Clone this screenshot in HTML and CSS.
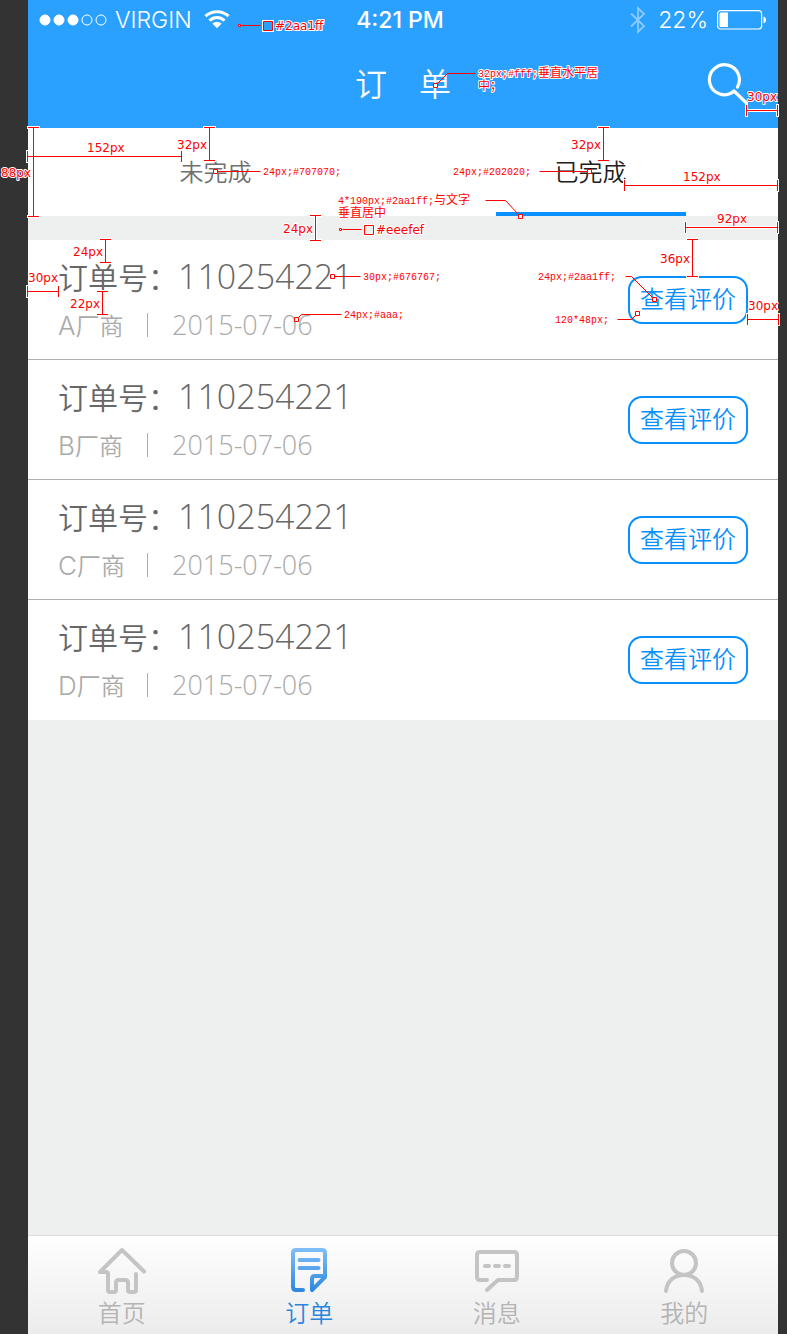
FILE: index.html
```html
<!DOCTYPE html>
<html lang="zh-CN">
<head>
<meta charset="utf-8">
<meta name="viewport" content="width=device-width, initial-scale=1">
<title>订单</title>
<link rel="stylesheet" href="styles.css">
</head>
<body>
<div class="phone">
  <header class="header">
    <div class="status">
      <div class="status-left">
        <svg class="signal" width="68" height="13" viewBox="0 0 68 13" fill="#fff" stroke="#fff" aria-hidden="true"><circle cx="6" cy="6" r="5"/><circle cx="20" cy="6" r="5"/><circle cx="34" cy="6" r="5"/><circle cx="48" cy="6" r="5" fill="none"/><circle cx="62" cy="6" r="5" fill="none"/></svg>
        <span class="carrier">VIRGIN</span>
        <svg width="26" height="20" viewBox="0 0 26 20" fill="none" stroke="#fff" stroke-width="3" aria-hidden="true"><path d="M1.500 6.200C8 .2 18 .2 24.500 6.200M5.500 10.600C10 6.600 16 6.600 20.500 10.600"/><path d="M8.300 13.600Q13 9.800 17.700 13.600L13 18.200Z" fill="#fff" stroke="none"/></svg>
      </div>
      <span class="clock">4:21 PM</span>
      <div class="status-right">
        <svg class="bluetooth" width="16" height="28" viewBox="0 0 16 28" fill="none" stroke="#8ccaff" stroke-width="1.800" aria-hidden="true"><path d="M1 7.500L14 20L8 26V2L14 8L1 20.500"/></svg>
        <span class="percent">22%</span>
        <svg width="50" height="20" viewBox="0 0 50 20" aria-hidden="true"><rect x="1.600" y=".7" width="44" height="18.300" rx="3" fill="none" stroke="#fff" stroke-width="1.200"/><path d="M5 2.500H12V17H5Q3.500 17 3.500 15.500V4Q3.500 2.500 5 2.500ZM47.500 6.500Q50 7 50 10T47.500 13.200Z" fill="#fff"/></svg>
      </div>
    </div>
    <div class="navbar">
      <h1 class="title">订　单</h1>
      <button class="search" type="button" aria-label="搜索"><svg width="42" height="44" viewBox="0 0 42 44" fill="none" stroke="#fff" stroke-width="3.200" stroke-linecap="round" stroke-linejoin="round"><path d="M31.500 25A15 15 0 1 0 23 32Q26 31 28 29L41 41.500"/></svg></button>
    </div>
  </header>
  <nav class="tabs">
    <a class="tab" href="#open">未完成</a>
    <a class="tab tab-active" href="#done">已完成</a>
  </nav>
  <main class="content">
    <ul class="orders">
      <li class="order"><div class="order-info"><h2 class="order-title">订单号：<span class="order-number">110254221</span></h2><p class="order-meta"><span class="order-vendor"><span class="vendor">A</span>厂商</span><span class="order-date">2015-07-06</span></p></div><button class="review" type="button">查看评价</button></li>
      <li class="order"><div class="order-info"><h2 class="order-title">订单号：<span class="order-number">110254221</span></h2><p class="order-meta"><span class="order-vendor"><span class="vendor">B</span>厂商</span><span class="order-date">2015-07-06</span></p></div><button class="review" type="button">查看评价</button></li>
      <li class="order"><div class="order-info"><h2 class="order-title">订单号：<span class="order-number">110254221</span></h2><p class="order-meta"><span class="order-vendor"><span class="vendor">C</span>厂商</span><span class="order-date">2015-07-06</span></p></div><button class="review" type="button">查看评价</button></li>
      <li class="order"><div class="order-info"><h2 class="order-title">订单号：<span class="order-number">110254221</span></h2><p class="order-meta"><span class="order-vendor"><span class="vendor">D</span>厂商</span><span class="order-date">2015-07-06</span></p></div><button class="review" type="button">查看评价</button></li>
    </ul>
  </main>
  <nav class="tabbar">
    <a class="tabbar-item" href="#home"><svg class="tabbar-icon" viewBox="0 0 48 48"><path d="M46 24.500L24 3L2 25H8Q10 25 10 27V43Q10 45 12 45H16Q18 45 18 43V36Q18 33 21 33H27Q30 33 30 36V43Q30 45 32 45H36Q38 45 38 43V27"/></svg>首页</a>
    <a class="tabbar-item tabbar-active" href="#orders"><svg class="tabbar-icon" viewBox="0 0 48 48"><defs><linearGradient id="doc" gradientUnits="userSpaceOnUse" x1="0" y1="0" x2="0" y2="46"><stop offset="0" stop-color="#82c0fa"/><stop offset="1" stop-color="#2a86dd"/></linearGradient></defs><path stroke="url(#doc)" d="M18 43H11Q8 43 8 40V6Q8 3 11 3H37Q40 3 40 6V30L27 43V32Q27 29 30 29H39M14.500 12.900H33.500M14.500 21.100H33.500"/></svg>订单</a>
    <a class="tabbar-item" href="#messages"><svg class="tabbar-icon" viewBox="0 0 48 48"><path d="M14 33H7Q4 33 4 30V8Q4 5 7 5H41Q44 5 44 8V30Q44 33 41 33H25L14 43M12 19H16M22 19H26M32 19H36"/></svg>消息</a>
    <a class="tabbar-item" href="#me"><svg class="tabbar-icon" viewBox="0 0 48 48"><circle cx="24" cy="16" r="12"/><path d="M6 44C7 34 14 28 24 28S41 34 42 44"/></svg>我的</a>
  </nav>
</div>

<svg class="notes" width="787" height="340" viewBox="0 0 787 340">
  <defs>
    <path id="rules" d="M27 156H181M27 151V161M181 151V161M624 185H777M624 180V190M777 180V190M685 227H777M685 222V232M777 222V232M746 110H777M746 105V115M777 105V115M27 291H58M27 286V296M58 286V296M747 319H778M747 314V324M778 314V324M33 127V216M28 127H38M28 216H38M209 127V160M204 127H214M204 160H214M603 127V160M598 127H608M598 160H608M315 215V240M310 215H320M310 240H320M105 239V262M100 239H110M100 262H110M102 291V314M97 291H107M97 314H107M692 239V276M687 239H697M687 276H697"/>
    <path id="leaders" d="M437 83L447 73H475M217 171H260M539 171H587M485 200H505L518 214M334 276H360M298 317L301 314H341M625 276H631L652 297M617 319H631L636 314M241 25H260M342 229H361"/>
  </defs>
  <g transform="translate(.5 .5)">
    <use href="#rules" class="halo"/><use href="#rules" class="rule"/>
    <use href="#leaders" class="leader"/>
    <path class="marker" d="M433 83h4v4h-4zM213 169h4v4h-4zM587 169h4v4h-4zM518 214h4v4h-4zM330 274h4v4h-4zM294 317h4v4h-4zM652 297h4v4h-4zM635 311h4v4h-4zM238 24h2v2h-2zM339 228h2v2h-2z"/>
    <path class="halo" d="M263 21h9v9h-9zM364 225h9v9h-9z"/>
    <path class="swatch-blue" d="M263 21h9v9h-9z"/><path class="swatch-gray" d="M364 225h9v9h-9z"/>
  </g>
  <g class="size">
    <text x="275" y="30">#2aa1ff</text><text x="376" y="234">#eeefef</text>
    <text x="87" y="152">152px</text><text x="177" y="149">32px</text><text x="1" y="177">88px</text>
    <text x="571" y="149">32px</text><text x="683" y="181">152px</text><text x="717" y="223">92px</text>
    <text x="747" y="101">30px</text><text x="283" y="233">24px</text><text x="73" y="256">24px</text>
    <text x="28" y="282">30px</text><text x="70" y="308">22px</text><text x="660" y="263">36px</text><text x="748" y="310">30px</text>
  </g>
  <g class="spec">
    <text x="478" y="77">32px;#fff;<tspan class="han">垂直水平居</tspan></text><text class="han" x="478" y="90">中；</text>
    <text x="263" y="175">24px;#707070;</text><text x="453" y="175">24px;#202020;</text>
    <text x="338" y="204">4*190px;#2aa1ff;<tspan class="han">与文字</tspan></text><text class="han" x="338" y="217">垂直居中</text>
    <text x="363" y="280">30px;#676767;</text><text x="344" y="318">24px;#aaa;</text>
    <text x="538" y="280">24px;#2aa1ff;</text><text x="555" y="323">120*48px;</text>
  </g>
</svg>
</body>
</html>
```
FILE: styles.css
```css
* { box-sizing: border-box; }

body {
  margin: 0;
  position: relative;
  background: #333;
  font-family: "Noto Sans CJK SC", sans-serif;
  font-weight: 350;
}

h1, h2, p, ul { margin: 0; padding: 0; font-weight: inherit; }
ul { list-style: none; }
a { color: inherit; text-decoration: none; }
button { font: inherit; padding: 0; cursor: pointer; }
svg { display: block; }

.phone {
  display: flex;
  flex-direction: column;
  min-height: 100vh;
  margin: 0 9px 0 28px;
  background: #eeefef;
}

.header { background: #2aa1ff; color: #fff; }

.status {
  display: grid;
  grid-template-columns: 1fr auto 1fr;
  align-items: center;
  height: 40px;
  padding: 0 12px 0 11px;
  font: 300 23px/40px Inter, sans-serif;
}
.status-left, .status-right { display: flex; align-items: center; }
.status-right { justify-content: flex-end; }
.carrier { margin: 0 12px 0 8px; }
.clock { font-weight: 500; margin-right: 5px; }
.percent { margin: 0 8px 0 12px; }

.navbar {
  display: grid;
  grid-template-columns: 1fr auto 1fr;
  align-items: center;
  height: 88px;
  padding: 0 30px;
}
.title { grid-column: 2; padding-bottom: 4px; font-size: 32px; line-height: 44px; }
.search { justify-self: end; background: none; border: 0; color: #fff; }

.tabs {
  display: grid;
  grid-template-columns: 1fr 1fr;
  justify-items: center;
  background: #fff;
}
.tab {
  width: 190px;
  height: 88px;
  border-bottom: 4px solid transparent;
  color: #707070;
  font-size: 24px;
  line-height: 86px;
  text-align: center;
}
.tab-active { color: #202020; border-color: #0a8fff; }

.content { flex: 1; padding-top: 24px; }
.order {
  display: flex;
  align-items: center;
  justify-content: space-between;
  height: 120px;
  padding: 0 30px;
  background: #fff;
  border-bottom: 1px solid #b0b0b0;
}
.order:last-child { border-color: #fff; }
.order-info { padding-bottom: 6px; }
.order-title {
  display: flex;
  align-items: center;
  color: #676767;
  font-size: 30px;
  line-height: 40px;
}
.order-number, .order-date {
  font-family: "Open Sans", sans-serif;
  font-weight: 300;
}
.order-number { font-size: 34px; }
.order-meta {
  display: flex;
  align-items: center;
  margin-top: 17px;
  color: #aaa;
  font-size: 24px;
  line-height: 24px;
}
.order-vendor { min-width: 89px; }
.vendor { font: 300 26px/24px Inter, sans-serif; }
.order-date {
  padding-left: 24px;
  border-left: 1px solid #aaa;
  font-size: 27px;
}
.review {
  width: 120px;
  height: 48px;
  padding-bottom: 3px;
  border: 2px solid #0a8fff;
  border-radius: 14px;
  background: #fff;
  color: #0a8fff;
  font-size: 24px;
  line-height: 40px;
}

.tabbar {
  display: grid;
  grid-template-columns: repeat(4, 1fr);
  height: 99px;
  padding-top: 11px;
  border-top: 1px solid #dcdddd;
  background: linear-gradient(#fefefe, #ececec);
}
.tabbar-item {
  display: flex;
  flex-direction: column;
  align-items: center;
  color: #b4b4b4;
  font-size: 24px;
  line-height: 34px;
}
.tabbar-active { color: #2a86dd; }
.tabbar-icon {
  width: 48px;
  height: 48px;
  fill: none;
  stroke: #c4c4c4;
  stroke-width: 4;
  stroke-linecap: round;
  stroke-linejoin: round;
}

.notes { position: absolute; top: 0; left: 0; pointer-events: none; }
.halo { fill: none; stroke: #fff; stroke-width: 3; stroke-linecap: square; }
.rule { fill: none; stroke: #f00; stroke-linecap: square; }
.leader { fill: none; stroke: #f00; }
.marker { fill: #fff; stroke: #f00; }
.swatch-blue { fill: #2aa1ff; stroke: #f00; }
.swatch-gray { fill: #eeefef; stroke: #f00; }
.notes text { fill: #f00; stroke: #fff; stroke-width: 2px; stroke-linejoin: round; paint-order: stroke; }
.size { font: 400 12px "DejaVu Sans", sans-serif; }
.spec { font: 400 10px "Liberation Mono", monospace; }
.notes .han { font: 400 12px "Noto Sans CJK SC", sans-serif; }
```
